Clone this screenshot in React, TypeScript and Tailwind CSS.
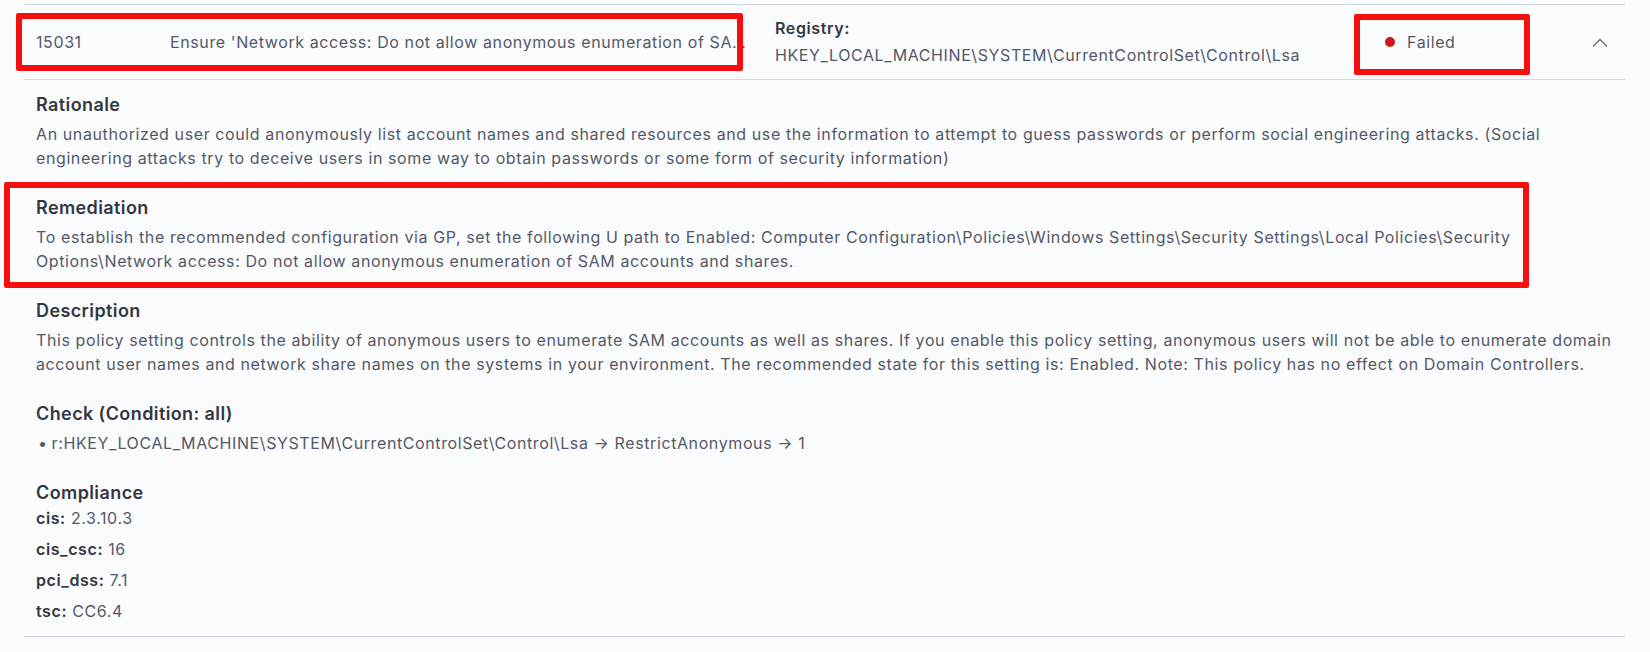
import { ReactNode } from "react";

const headingCls = "text-[18px] font-semibold leading-[28px] tracking-[0.4px] text-[#343741]";
const bodyCls = "text-[16px] leading-[24px] tracking-[0.6px] text-[#535966]";

function Section({ title, children, className = "" }: { title: string; children: ReactNode; className?: string }) {
  return (
    <section className={className}>
      <h3 className={`${headingCls} mb-[3px]`}>{title}</h3>
      {children}
    </section>
  );
}

function Annotation({ className }: { className: string }) {
  return <div className={`pointer-events-none absolute rounded-[2px] border-[6px] border-[#f50f0f] ${className}`} />;
}

const compliance: [string, string][] = [
  ["cis", "2.3.10.3"],
  ["cis_csc", "16"],
  ["pci_dss", "7.1"],
  ["tsc", "CC6.4"],
];

export default function App() {
  return (
    <div className="relative h-[652px] w-[1650px] overflow-hidden bg-[#fafbfd] font-['Inter',sans-serif]">
      <div className="ml-[24px] mt-[4px] w-[1601px] border-y border-[#d3dae6]">
        {/* row header */}
        <div className="flex h-[75px] items-center border-b border-[#d3dae6] pl-3 pr-[17px] text-[16px] tracking-[0.6px]">
          <span className="w-[134px] shrink-0 text-[#535966]">15031</span>
          <span className="w-[578px] shrink-0 truncate text-[#535966]">
            Ensure 'Network access: Do not allow anonymous enumeration of SAM accounts and shares' is set to 'Enabled'
          </span>
          <div className="ml-[27px] flex w-[610px] shrink-0 flex-col gap-[6px]">
            <span className="font-semibold leading-[21px] text-[#343741]">Registry:</span>
            <span className="leading-[21px] text-[#535966]">HKEY_LOCAL_MACHINE\SYSTEM\CurrentControlSet\Control\Lsa</span>
          </div>
          <div className="flex items-center gap-[12px]">
            <span className="h-[10px] w-[10px] rounded-full bg-[#d4161b]" />
            <span className="text-[#535966]">Failed</span>
          </div>
          <button className="ml-auto text-[#69707d]">
            <svg width="16" height="11" viewBox="0 0 16 11" fill="none" stroke="currentColor" strokeWidth="1.4">
              <polyline points="1,9.5 8,2.5 15,9.5" />
            </svg>
          </button>
        </div>

        {/* expanded details */}
        <div className="flex flex-col gap-6 px-3 pb-[14px] pt-[11px]">
          <Section title="Rationale">
            <p className={bodyCls}>
              An unauthorized user could anonymously list account names and shared resources and use the information to attempt to guess passwords or perform social engineering attacks. (Social engineering attacks try to deceive users in some way to obtain passwords or some form of security information)
            </p>
          </Section>
          <Section title="Remediation">
            <p className={bodyCls}>
              To establish the recommended configuration via GP, set the following U path to Enabled: Computer Configuration\Policies\Windows Settings\Security Settings\Local Policies\Security Options\Network access: Do not allow anonymous enumeration of SAM accounts and shares.
            </p>
          </Section>
          <Section title="Description">
            <p className={bodyCls}>
              This policy setting controls the ability of anonymous users to enumerate SAM accounts as well as shares. If you enable this policy setting, anonymous users will not be able to enumerate domain account user names and network share names on the systems in your environment. The recommended state for this setting is: Enabled. Note: This policy has no effect on Domain Controllers.
            </p>
          </Section>
          <Section title="Check (Condition: all)">
            <ul className={bodyCls}>
              <li className="flex gap-[4px] pl-[2px]">
                <span>•</span>
                <span>r:HKEY_LOCAL_MACHINE\SYSTEM\CurrentControlSet\Control\Lsa → RestrictAnonymous → 1</span>
              </li>
            </ul>
          </Section>
          <section>
            <h3 className={headingCls}>Compliance</h3>
            <div className="flex flex-col gap-[9px]">
              {compliance.map(([k, v]) => (
                <div key={k} className="text-[16px] leading-[22px] tracking-[0.6px] text-[#535966]">
                  <span className="font-semibold text-[#343741]">{k}:</span> {v}
                </div>
              ))}
            </div>
          </section>
        </div>
      </div>

      {/* red annotation boxes */}
      <Annotation className="left-[16px] top-[13px] h-[58px] w-[727px]" />
      <Annotation className="left-[1354px] top-[14px] h-[61px] w-[176px]" />
      <Annotation className="left-[4px] top-[182px] h-[106px] w-[1525px]" />
    </div>
  );
}
